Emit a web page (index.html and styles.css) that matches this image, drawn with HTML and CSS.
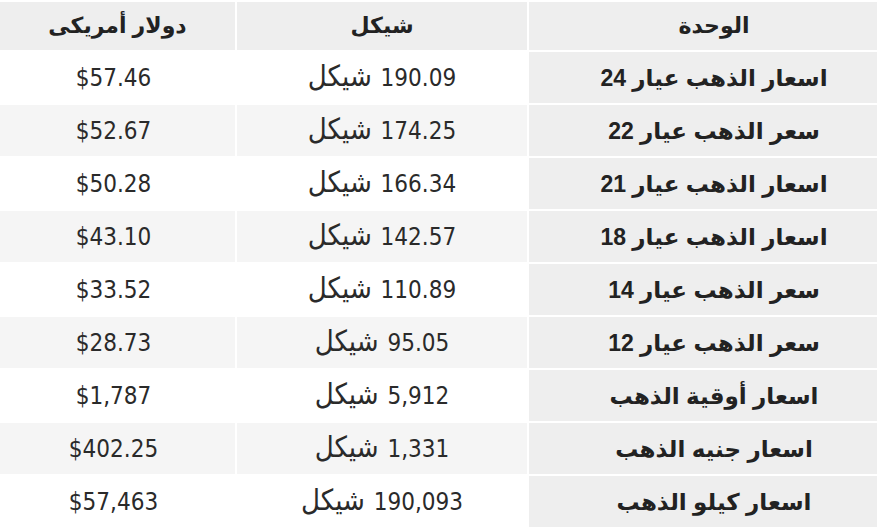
FILE: index.html
```html
<!DOCTYPE html>
<html lang="ar" dir="rtl">
<head>
<meta charset="utf-8">
<title>أسعار الذهب</title>
<link rel="stylesheet" href="styles.css">
</head>
<body>
<table class="prices">
  <colgroup>
    <col class="c-unit">
    <col class="c-ils">
    <col class="c-usd">
  </colgroup>
  <thead>
    <tr>
      <th class="unit">الوحدة</th>
      <th>شيكل</th>
      <th>دولار أمريكى</th>
    </tr>
  </thead>
  <tbody>
    <tr><td class="unit">اسعار الذهب عيار 24</td><td>190.09 <span class="cur">شيكل</span></td><td class="usd">$57.46</td></tr>
    <tr><td class="unit">سعر الذهب عيار 22</td><td>174.25 <span class="cur">شيكل</span></td><td class="usd">$52.67</td></tr>
    <tr><td class="unit">اسعار الذهب عيار 21</td><td>166.34 <span class="cur">شيكل</span></td><td class="usd">$50.28</td></tr>
    <tr><td class="unit">اسعار الذهب عيار 18</td><td>142.57 <span class="cur">شيكل</span></td><td class="usd">$43.10</td></tr>
    <tr><td class="unit">سعر الذهب عيار 14</td><td>110.89 <span class="cur">شيكل</span></td><td class="usd">$33.52</td></tr>
    <tr><td class="unit">سعر الذهب عيار 12</td><td>95.05 <span class="cur">شيكل</span></td><td class="usd">$28.73</td></tr>
    <tr><td class="unit">اسعار أوقية الذهب</td><td>5,912 <span class="cur">شيكل</span></td><td class="usd">$1,787</td></tr>
    <tr><td class="unit">اسعار جنيه الذهب</td><td>1,331 <span class="cur">شيكل</span></td><td class="usd">$402.25</td></tr>
    <tr><td class="unit">اسعار كيلو الذهب</td><td>190,093 <span class="cur">شيكل</span></td><td class="usd">$57,463</td></tr>
  </tbody>
</table>
</body>
</html>
```
FILE: styles.css
```css
html, body {
  margin: 0;
  padding: 0;
  background: #ffffff;
}
body {
  font-family: "DejaVu Sans Condensed", "DejaVu Sans", sans-serif;
  color: #2a2a2a;
  overflow: hidden;
}
.prices {
  width: 879px;
  margin: 0 -2px 0 0;
  border-collapse: separate;
  border-spacing: 2px;
  table-layout: fixed;
}
.c-unit { width: 348px; }
.c-ils { width: 290px; }
.c-usd { width: 235px; }
.prices th {
  height: 48px;
  padding: 0;
  line-height: 24px;
  background: #eeeeee;
  font-family: "Liberation Sans", "DejaVu Sans", sans-serif;
  font-weight: bold;
  font-size: 22px;
  color: #222222;
  text-align: center;
}
.prices td {
  height: 51px;
  padding: 0;
  line-height: 24px;
  text-align: center;
  font-size: 24px;
  background: #ffffff;
}
.prices td .cur {
  font-size: 29px;
  line-height: 16px;
  margin-right: 2px;
}
.prices tbody tr:nth-child(even) td {
  background: #f5f5f5;
}
.prices td.unit,
.prices tbody tr:nth-child(even) td.unit {
  background: #eeeeee;
  font-family: "Liberation Sans", "DejaVu Sans", sans-serif;
  font-weight: bold;
  font-size: 23px;
  color: #222222;
  padding: 0 0 0 22px;
}
.prices th.unit {
  padding: 0 0 0 22px;
}
.prices td.usd {
  padding: 0 8px 0 0;
}
```
